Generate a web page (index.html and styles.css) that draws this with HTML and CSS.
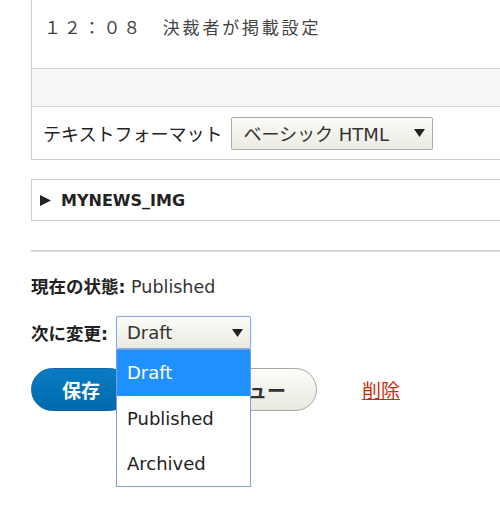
FILE: index.html
```html
<!DOCTYPE html>
<html lang="ja">
<head>
<meta charset="utf-8">
<title>Edit</title>
<link rel="stylesheet" href="styles.css">
</head>
<body>
<div class="page">
  <div class="editor">
    <div class="editor-body"><p class="editor-text">１２：０８　決裁者が掲載設定</p></div>
    <div class="editor-status"></div>
    <div class="format-row">
      <span class="format-label">テキストフォーマット</span>
      <div class="select select-format">
        <span class="select-value">ベーシック HTML</span>
        <svg class="select-arrow" width="11" height="8" viewBox="0 0 11 8"><polygon points="0,0 11,0 5.5,8" fill="#222"/></svg>
      </div>
    </div>
  </div>

  <div class="details">
    <svg class="details-marker" width="11" height="11" viewBox="0 0 11 11"><polygon points="0,0 11,5.5 0,11" fill="#222"/></svg>
    <span class="details-title">MYNEWS_IMG</span>
  </div>

  <div class="divider"></div>

  <div class="state-line"><span class="field-label">現在の状態:</span> <span class="state-value">Published</span></div>

  <div class="change-row">
    <span class="field-label">次に変更:</span>
    <div class="select-wrap">
      <div class="select select-focus">
        <span class="select-value">Draft</span>
        <svg class="select-arrow" width="11" height="8" viewBox="0 0 11 8"><polygon points="0,0 11,0 5.5,8" fill="#222"/></svg>
      </div>
      <ul class="options">
        <li class="option option-active">Draft</li>
        <li class="option">Published</li>
        <li class="option">Archived</li>
      </ul>
    </div>
  </div>

  <div class="actions">
    <span class="button button-primary">保存</span>
    <span class="button">プレビュー</span>
    <a class="delete-link" href="#">削除</a>
  </div>
</div>
</body>
</html>
```

FILE: styles.css
```css
html {
  overflow: hidden;
}

body {
  margin: 0;
  padding: 0;
  min-height: 508px;
  background: #fff;
  font-family: "DejaVu Sans", "Noto Sans CJK JP", sans-serif;
  color: #222;
}

.page {
  padding-left: 31px;
  margin-right: -20px;
}

.editor {
  border: 1px solid #cfcfcf;
  border-top: none;
}

.editor-body {
  box-sizing: border-box;
  height: 69px;
  border-bottom: 1px solid #d4d4d4;
  padding: 17px 0 0 12px;
}

.editor-text {
  margin: 0;
  line-height: 24px;
  font-family: "Liberation Serif", "Noto Sans CJK JP", serif;
  font-size: 17px;
  letter-spacing: 2.8px;
  color: #444;
}

.editor-status {
  height: 37px;
  background: #f6f6f6;
  border-bottom: 1px solid #d4d4d4;
}

.format-row {
  height: 52px;
  display: flex;
  align-items: center;
  padding-left: 11px;
  gap: 9px;
}

.format-label {
  font-size: 18px;
  color: #222;
}

.select {
  box-sizing: border-box;
  height: 33px;
  display: flex;
  align-items: center;
  justify-content: space-between;
  border: 1px solid #a8a8a8;
  border-radius: 2px;
  background: linear-gradient(#fbfbf8, #ebebe2);
  font-size: 18px;
  color: #333;
}

.select-format {
  width: 202px;
  padding: 0 7px 0 11px;
}

.select-value {
  white-space: nowrap;
}

.select-arrow {
  display: block;
}

.details {
  margin-top: 19px;
  height: 40px;
  border: 1px solid #cfcfcf;
  display: flex;
  align-items: center;
  padding-left: 8px;
  gap: 10px;
}

.details-title {
  font-weight: bold;
  font-size: 16px;
  color: #222;
}

.divider {
  margin-top: 29px;
  border-top: 2px solid #d9d9d9;
}

.state-line {
  margin-top: 24px;
  height: 22px;
  line-height: 22px;
  font-size: 17.5px;
  color: #333;
}

.field-label {
  font-weight: bold;
  color: #222;
}

.change-row {
  margin-top: 18px;
  display: flex;
  align-items: center;
  gap: 8px;
  font-size: 17.5px;
}

.select-wrap {
  position: relative;
}

.select-focus {
  width: 135px;
  padding: 0 7px 0 10px;
  border-color: #86a8e6;
  box-shadow: 0 0 1px #9dbcf0;
}

.options {
  position: absolute;
  left: 0;
  top: 33px;
  z-index: 2;
  margin: 0;
  padding: 0;
  list-style: none;
  width: 135px;
  box-sizing: border-box;
  border: 1px solid #7f9fdc;
  background: #fff;
}

.option {
  height: 45px;
  line-height: 45px;
  padding-left: 10px;
  font-size: 18px;
  color: #222;
}

.option-active {
  height: 46px;
  line-height: 46px;
  background: #1e90ff;
  color: #fff;
}

.actions {
  margin-top: 19px;
  display: flex;
  align-items: center;
}

.button {
  box-sizing: border-box;
  height: 43px;
  display: flex;
  align-items: center;
  padding: 0 30px;
  border: 1px solid #a6a6a6;
  border-radius: 22px;
  background: linear-gradient(#fcfcfa, #e8e8df);
  font-size: 19px;
  font-weight: bold;
  color: #333;
  margin-right: 29px;
}

.button-primary {
  background: linear-gradient(#0a7cc4, #0069ad);
  border-color: #15639c;
  color: #fff;
}

.button + .button {
  margin-right: 45px;
}

.delete-link {
  font-size: 19px;
  color: #c8300c;
  text-decoration: underline;
}
```
